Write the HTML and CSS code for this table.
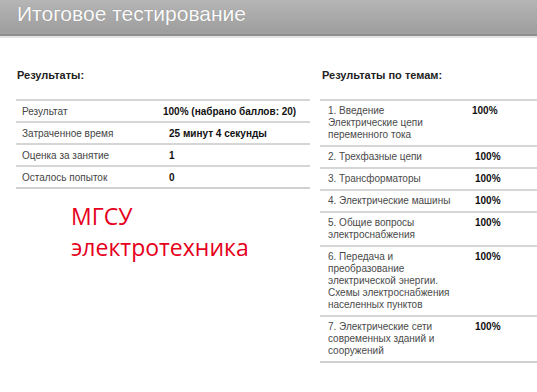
FILE: index.html
```html
<!DOCTYPE html>
<html lang="ru">
<head>
<meta charset="utf-8">
<title>Итоговое тестирование</title>
<link rel="stylesheet" href="styles.css">
</head>
<body>
<header class="topbar">
  <h1 class="title">Итоговое тестирование</h1>
</header>
<main class="content">
  <section class="col col-left">
    <h2 class="heading">Результаты:</h2>
    <div class="table summary">
      <div class="row"><span class="label">Результат</span><span class="value">100% (набрано баллов: 20)</span></div>
      <div class="row"><span class="label">Затраченное время</span><span class="value indent">25 минут 4 секунды</span></div>
      <div class="row"><span class="label">Оценка за занятие</span><span class="value indent">1</span></div>
      <div class="row"><span class="label">Осталось попыток</span><span class="value indent">0</span></div>
    </div>
    <div class="stamp">МГСУ<br>электротехника</div>
  </section>
  <section class="col col-right">
    <h2 class="heading">Результаты по темам:</h2>
    <div class="table topics">
      <div class="trow"><span class="topic">1. Введение<br>Электрические цепи переменного тока</span><span class="pct first">100%</span></div>
      <div class="trow"><span class="topic">2. Трехфазные цепи</span><span class="pct">100%</span></div>
      <div class="trow"><span class="topic">3. Трансформаторы</span><span class="pct">100%</span></div>
      <div class="trow"><span class="topic">4. Электрические машины</span><span class="pct">100%</span></div>
      <div class="trow"><span class="topic">5. Общие вопросы электроснабжения</span><span class="pct">100%</span></div>
      <div class="trow"><span class="topic">6. Передача и преобразование электрической энергии. Схемы электроснабжения населенных пунктов</span><span class="pct">100%</span></div>
      <div class="trow"><span class="topic">7. Электрические сети современных зданий и сооружений</span><span class="pct">100%</span></div>
    </div>
  </section>
</main>
</body>
</html>
```

FILE: styles.css
```css
* { box-sizing: border-box; }
html, body { margin: 0; padding: 0; background: #fff; }
body {
  width: 537px;
  height: 392px;
  overflow: hidden;
  font-family: "Liberation Sans", Arial, sans-serif;
  color: #333;
}
.topbar {
  height: 36px;
  background: linear-gradient(#b6b6b6 0px, #adadad 12px, #a4a4a4 24px, #9f9f9f 31px);
  border-bottom: 2px solid #8e8e8e;
  box-shadow: 0 2px 0 #e4e4e4;
  padding-left: 17px;
}
.title {
  margin: 0;
  font-weight: normal;
  font-size: 21px;
  line-height: 28px;
  color: #fafafa;
  text-shadow: 0 0 1px rgba(0,0,0,0.25);
}
.content {
  display: flex;
  padding-top: 32px;
}
.col-left { width: 294px; margin-left: 16px; }
.col-right { flex: 1; margin-left: 10px; }
.heading {
  margin: 0 0 17px 1px;
  font-size: 11px;
  line-height: 14px;
  font-weight: bold;
  color: #222;
}
.col-right .heading { margin-left: 2px; }
.summary .row {
  display: flex;
  align-items: center;
  height: 22px;
  border-top: 2px solid #d6d6d6;
  font-size: 10px;
}
.summary .row:last-child { border-bottom: 2px solid #d0d0d0; height: 24px; }
.label { width: 147px; padding-left: 6px; color: #444; }
.value { font-weight: bold; color: #111; }
.value.indent { padding-left: 6px; }
.stamp {
  margin: 12px 0 0 55px;
  font-family: "Open Sans", "Noto Sans", sans-serif;
  font-size: 23px;
  line-height: 31px;
  color: #e6001c;
}
.topics .trow {
  display: flex;
  border-top: 2px solid #d6d6d6;
  padding: 4px 0;
  font-size: 10px;
  line-height: 12px;
}
.topics .trow:last-child { border-bottom: 2px solid #d0d0d0; }
.topic { width: 140px; padding-left: 8px; padding-right: 2px; color: #4a4a4a; }
.pct { padding-left: 15px; font-weight: bold; color: #111; }
.pct.first { padding-left: 12px; }
```
